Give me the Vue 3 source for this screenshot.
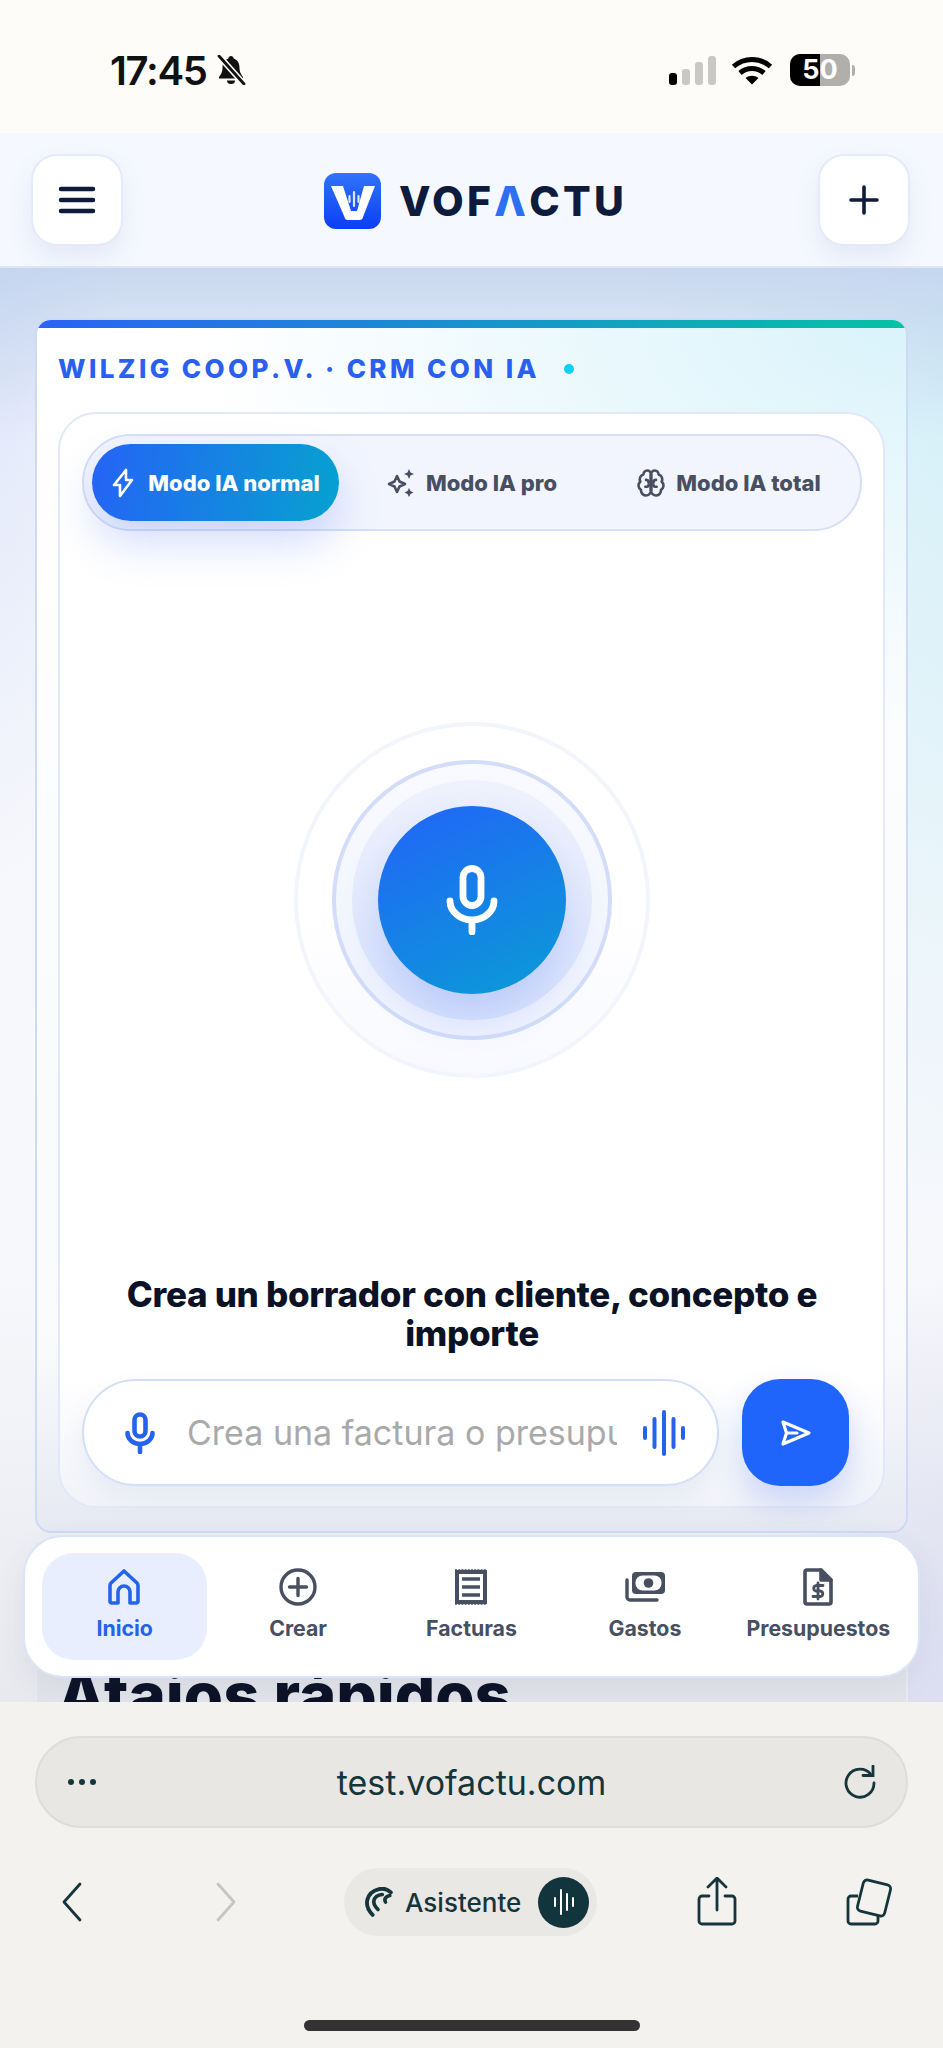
<template>
  <div class="phone">
    <div class="statusBar">
      <div class="statusLeft">
        <span class="time">17:45</span>
        <svg class="bell" viewBox="0 0 30 30">
          <path d="M15 1c1.500 0 2.500 1 2.700 2.500C22 5 23.500 8.500 23.500 13c0 4 1.500 6.500 3.500 9v1.500H3V22c2-2.500 3.500-5 3.500-9 0-4.500 1.500-8 5.800-9.500C12.500 2 13.500 1 15 1z" fill="#111"/>
          <path d="M11 25.500h8a4 3.500 0 0 1-8 0z" fill="#111"/>
          <path d="M3 1l25 28" stroke="#fdfcf8" stroke-width="6"/>
          <path d="M3 1l25 28" stroke="#111" stroke-width="2.800" stroke-linecap="round"/>
        </svg>
      </div>
      <div class="statusRight">
        <div class="signal">
          <i class="on" style="height: 12px"></i>
          <i style="height: 16px"></i>
          <i style="height: 23px"></i>
          <i style="height: 29px"></i>
        </div>
        <svg class="wifi" viewBox="0 0 42 30" fill="none" stroke="#000" stroke-width="5">
          <path d="M2.500 11.500C13 2 29 2 39.500 11.500"/>
          <path d="M9 18c7-6 17-6 24 0"/>
          <path d="M21 29.500l-6.500-6.500c3.500-3 9.500-3 13 0z" fill="#000" stroke="none"/>
        </svg>
        <div class="battery">
          <span class="batteryFill"></span>
          <span class="batteryText">50</span>
        </div>
        <span class="batteryNub"></span>
      </div>
    </div>

    <header class="topBar">
      <button class="squareButton">
        <svg width="38" height="28" viewBox="0 0 38 28" fill="none" stroke="#0f1b3a" stroke-width="4.500" stroke-linecap="round">
          <path d="M3 3h32M3 14h32M3 25h32"/>
        </svg>
      </button>
      <div class="logo">
        <svg class="logoIcon" viewBox="0 0 57 56">
          <defs>
            <linearGradient id="logoBg" x1="0" y1="0" x2="0" y2="1">
              <stop offset="0" stop-color="#3173fb"/>
              <stop offset="1" stop-color="#0b3ff5"/>
            </linearGradient>
          </defs>
          <rect width="57" height="56" rx="12" fill="url(#logoBg)"/>
          <path d="M7 13h12l8 25h6l7-25h11L39 44a3.500 3.500 0 0 1-3.500 3H24a3.500 3.500 0 0 1-3.500-3z" fill="#fff"/>
          <path d="M25.500 23v6M30 19v14M34.500 23v6" stroke="#dce8ff" stroke-width="2.200" stroke-linecap="round"/>
        </svg>
        <span class="logoText">VOF<span class="logoAccent">Λ</span>CTU</span>
      </div>
      <button class="squareButton">
        <svg width="30" height="30" viewBox="0 0 30 30" fill="none" stroke="#0f1b3a" stroke-width="3.600" stroke-linecap="round">
          <path d="M15 2v26M2 15h26"/>
        </svg>
      </button>
    </header>

    <main class="content">
      <section class="card">
        <div class="cardBar"></div>
        <div class="eyebrow">
          <span>WILZIG COOP.V. · CRM CON IA</span>
          <i class="dot"></i>
        </div>
        <div class="panel">
          <div class="modes">
            <div v-for="mode in modes" :key="mode.label" class="mode" :class="{ active: mode.active }">
              <svg v-if="mode.icon === 'bolt'" class="modeIcon boltIcon" viewBox="0 0 24 30" fill="none" stroke="currentColor" stroke-width="2.600" stroke-linejoin="round" stroke-linecap="round">
                <path d="M15 2v10h6L9 28V17H3z"/>
              </svg>
              <svg v-else-if="mode.icon === 'sparkles'" class="modeIcon" viewBox="0 0 30 30" fill="none" stroke="currentColor" stroke-width="2.600" stroke-linejoin="round">
                <path d="M11 8l2.500 5.500L19 16l-5.500 2.500L11 24l-2.500-5.500L3 16l5.500-2.500z"/>
                <path d="M23 1l1.500 3.500L28 6l-3.500 1.500L23 11l-1.500-3.500L18 6l3.500-1.500zM23 20l1.500 3L27.500 24.500 24.500 26 23 29l-1.500-3-3-1.500 3-1.500z" fill="currentColor" stroke="none"/>
              </svg>
              <svg v-else class="modeIcon" viewBox="0 0 24 24" fill="none" stroke="currentColor" stroke-width="2.100" stroke-linecap="round" stroke-linejoin="round">
                <path d="M12 5a3 3 0 1 0-5.997.125 4 4 0 0 0-2.526 5.770 4 4 0 0 0 .556 6.588A4 4 0 1 0 12 18Z"/>
                <path d="M12 5a3 3 0 1 1 5.997.125 4 4 0 0 1 2.526 5.770 4 4 0 0 1-.556 6.588A4 4 0 1 1 12 18Z"/>
                <path d="M12 5v13M8 9.500c1.500 0 2 .800 2 2M16 9.500c-1.500 0-2 .800-2 2M7.500 15c1.500 0 2.500-.500 2.500-1.500M16.500 15c-1.500 0-2.500-.500-2.500-1.500"/>
              </svg>
              <span>{{ mode.label }}</span>
            </div>
          </div>

          <div class="stage">
            <div class="ringOuter">
              <div class="ringBorder">
                <div class="ringSolid">
                  <button class="micButton">
                    <svg width="52" height="70" viewBox="0 0 52 70" fill="none" stroke="#fff" stroke-width="6.800" stroke-linecap="round">
                      <rect x="17" y="3.500" width="18" height="37" rx="9"/>
                      <path d="M4 36a22 19 0 0 0 44 0M26 56v11"/>
                    </svg>
                  </button>
                </div>
              </div>
            </div>
          </div>

          <h2 class="prompt">Crea un borrador con cliente, concepto e importe</h2>

          <div class="composer">
            <div class="inputBox">
              <svg class="inputMic" viewBox="0 0 32 42" fill="none" stroke="#2563eb" stroke-width="4.600" stroke-linecap="round">
                <rect x="10.500" y="2.500" width="11" height="22" rx="5.500"/>
                <path d="M3.500 21a12.500 11 0 0 0 25 0M16 33v7"/>
              </svg>
              <input class="textInput" placeholder="Crea una factura o presupuesto" />
              <svg class="inputWave" viewBox="0 0 44 46" fill="none" stroke="#2563eb" stroke-width="4" stroke-linecap="round">
                <path d="M3 18v10M12.500 9v28M22 2v42M31.500 9v28M41 18v10"/>
              </svg>
            </div>
            <button class="sendButton">
              <svg width="32" height="28" viewBox="0 0 32 28" fill="none" stroke="#fff" stroke-width="3.200" stroke-linejoin="round" stroke-linecap="round">
                <path d="M3 3l26 11L3 25l3.500-11zM6.500 14H17"/>
              </svg>
            </button>
          </div>
        </div>
      </section>

      <section class="shortcuts">
        <h2>Atajos rápidos</h2>
      </section>

      <nav class="bottomNav">
        <div v-for="item in navItems" :key="item.label" class="navItem" :class="{ active: item.active }">
          <svg v-if="item.icon === 'home'" class="navIcon" viewBox="1 0 40 40" fill="none" stroke="currentColor" stroke-width="3.600" stroke-linejoin="round">
            <path d="M20 4l13 12c.800.700 1 1.500 1 2.500V34a2 2 0 0 1-2 2h-6V25a6 6 0 0 0-12 0v11H8a2 2 0 0 1-2-2V18.500c0-1 .200-1.800 1-2.500z"/>
          </svg>
          <svg v-else-if="item.icon === 'plus'" class="navIcon" viewBox="0 0 40 40" fill="none" stroke="currentColor" stroke-width="3.400" stroke-linecap="round">
            <circle cx="20" cy="20" r="17"/>
            <path d="M20 11.500v17M11.500 20h17"/>
          </svg>
          <svg v-else-if="item.icon === 'receipt'" class="navIcon" viewBox="0 0 40 40" fill="none" stroke="currentColor">
            <rect x="6" y="5" width="28" height="30" stroke-width="4"/>
            <path d="M4 3.500h32M4 36.500h32" stroke-width="2.400" stroke-dasharray="2 1.200"/>
            <path d="M11 12h18M11 20h18M11 28h18" stroke-width="3.400"/>
          </svg>
          <svg v-else-if="item.icon === 'money'" class="navIcon" viewBox="0 0 40 40" fill="none" stroke="currentColor">
            <rect x="7" y="5" width="33" height="22" rx="4" fill="currentColor" stroke="none"/>
            <rect x="10.500" y="8.500" width="26" height="15" rx="7" fill="#fff" stroke="none"/>
            <circle cx="23.500" cy="16" r="4.800" fill="currentColor" stroke="none"/>
            <path d="M2 13v17a3 3 0 0 0 3 3h27" stroke-width="3.400" stroke-linecap="round"/>
          </svg>
          <svg v-else class="navIcon" viewBox="0 0 40 40" fill="none" stroke="currentColor" stroke-width="3.600" stroke-linejoin="round" stroke-linecap="round">
            <path d="M9 3h14l10 10v22a2 2 0 0 1-2 2H9a2 2 0 0 1-2-2V5a2 2 0 0 1 2-2z"/>
            <path d="M23 3l10 10H23z" fill="currentColor"/>
            <path d="M25 18.500h-7a2.800 2.800 0 0 0 0 5.500h4.500a2.800 2.800 0 0 1 0 5.500H15M20 16v16" stroke-width="2.800"/>
          </svg>
          <span>{{ item.label }}</span>
        </div>
      </nav>
    </main>

    <footer class="browser">
      <div class="urlBar">
        <span class="urlDots"><i></i><i></i><i></i></span>
        <span class="urlText">test.vofactu.com</span>
        <svg class="reload" viewBox="0 0 34 34" fill="none" stroke="#16353b" stroke-width="2.800" stroke-linecap="round" stroke-linejoin="round">
          <path d="M28 9.500A14 14 0 1 0 31 18"/>
          <path d="M20 10.500h10V1" stroke-linejoin="miter"/>
        </svg>
      </div>
      <div class="toolBar">
        <svg class="chevron" viewBox="0 0 20 40" fill="none" stroke="#16353b" stroke-width="2.800" stroke-linecap="round" stroke-linejoin="round">
          <path d="M18 2L2 20l16 18"/>
        </svg>
        <svg class="chevron forward" viewBox="0 0 20 40" fill="none" stroke="#c7c5c1" stroke-width="2.800" stroke-linecap="round" stroke-linejoin="round">
          <path d="M2 2l16 18L2 38"/>
        </svg>
        <div class="assistant">
          <svg class="assistantIcon" viewBox="0 0 28 28" fill="none" stroke="#16353b" stroke-linecap="round">
            <path d="M9 26C0 17 3 5 15 2c4-1 8 0 11 3" stroke-width="3.600"/>
            <path d="M14 21C7 14 10 8 18 7" stroke-width="3.400"/>
            <path d="M21 14c-1.500-3 0-5 4-6" stroke-width="3.400"/>
          </svg>
          <span>Asistente</span>
          <span class="assistantWave">
            <svg width="22" height="30" viewBox="0 0 22 30" fill="none" stroke="#fff" stroke-width="2" stroke-linecap="round">
              <path d="M2 11v8M8 3v24M14 7v16M20 11v8"/>
            </svg>
          </span>
        </div>
        <svg class="share" viewBox="0 0 40 50" fill="none" stroke="#16353b" stroke-width="2.800" stroke-linecap="round" stroke-linejoin="round">
          <path d="M20 33V2M11 10l9-9 9 9"/>
          <path d="M12 19H5a3 3 0 0 0-3 3v22a3 3 0 0 0 3 3h30a3 3 0 0 0 3-3V22a3 3 0 0 0-3-3h-7"/>
        </svg>
        <svg class="tabs" viewBox="0 0 50 50" fill="none" stroke="#16353b" stroke-width="2.800" stroke-linejoin="round">
          <path d="M13 19H6a3 3 0 0 0-3 3v22a3 3 0 0 0 3 3h24a3 3 0 0 0 3-3v-5"/>
          <rect x="15" y="5" width="28" height="32" rx="4" transform="rotate(14 29 21)"/>
        </svg>
      </div>
      <div class="homeIndicator"></div>
    </footer>
  </div>
</template>

<script setup>
const modes = [
  { label: 'Modo IA normal', icon: 'bolt', active: true },
  { label: 'Modo IA pro', icon: 'sparkles' },
  { label: 'Modo IA total', icon: 'brain' },
];

const navItems = [
  { label: 'Inicio', icon: 'home', active: true },
  { label: 'Crear', icon: 'plus' },
  { label: 'Facturas', icon: 'receipt' },
  { label: 'Gastos', icon: 'money' },
  { label: 'Presupuestos', icon: 'file' },
];
</script>

<style>
html,
body {
  margin: 0;
  background: #f4f2ee;
}
</style>

<style scoped>
.phone {
  width: 943px;
  height: 2048px;
  display: flex;
  flex-direction: column;
  overflow: hidden;
  font-family: Inter, 'Liberation Sans', sans-serif;
}

button {
  border: none;
  padding: 0;
  cursor: pointer;
}

.statusBar {
  height: 133px;
  flex-shrink: 0;
  box-sizing: border-box;
  background: #fdfcf8;
  padding: 50px 88px 0 110px;
  display: flex;
  justify-content: space-between;
  align-items: flex-start;
}

.statusLeft {
  display: flex;
  align-items: center;
  gap: 9px;
  height: 40px;
}

.time {
  font-size: 40px;
  font-weight: 600;
  letter-spacing: -1.3px;
  color: #111;
}

.bell {
  width: 30px;
  height: 30px;
}

.statusRight {
  display: flex;
  align-items: center;
  height: 40px;
}

.signal {
  display: flex;
  align-items: flex-end;
  gap: 5px;
  height: 30px;
}

.signal i {
  width: 8px;
  border-radius: 3px;
  background: #c9c8c4;
}

.signal i.on {
  background: #000;
}

.wifi {
  width: 42px;
  height: 30px;
  margin-left: 15px;
}

.battery {
  position: relative;
  width: 60px;
  height: 32px;
  margin-left: 17px;
  border-radius: 10px;
  overflow: hidden;
  background: #b0afab;
  text-align: center;
}

.batteryFill {
  position: absolute;
  left: 0;
  top: 0;
  bottom: 0;
  width: 30px;
  background: #000;
}

.batteryText {
  position: relative;
  font-size: 27px;
  font-weight: 700;
  line-height: 32px;
  color: #fff;
}

.batteryNub {
  width: 3px;
  height: 11px;
  margin-left: 2px;
  border-radius: 0 3px 3px 0;
  background: #b0afab;
}

.topBar {
  height: 135px;
  flex-shrink: 0;
  box-sizing: border-box;
  background: #f5f8ff;
  border-bottom: 2px solid #dfe6f6;
  padding: 0 33px 0 31px;
  display: flex;
  justify-content: space-between;
  align-items: center;
}

.squareButton {
  width: 92px;
  height: 92px;
  border-radius: 26px;
  background: #fff;
  border: 2px solid #e5eafa;
  box-shadow: 0 12px 24px rgba(90, 110, 180, 0.1);
  display: flex;
  align-items: center;
  justify-content: center;
}

.logo {
  display: flex;
  align-items: center;
  gap: 18px;
  margin: 3px 0 0 10px;
}

.logoIcon {
  width: 57px;
  height: 56px;
}

.logoText {
  font-size: 41px;
  font-weight: 800;
  letter-spacing: 3.3px;
  line-height: 56px;
  color: #0e1b3d;
}

.logoAccent {
  color: #2b6ff2;
}

.content {
  position: relative;
  flex: 1;
  min-height: 0;
  overflow: hidden;
  box-sizing: border-box;
  padding: 50px 35px 0;
  background:
    linear-gradient(180deg, rgba(195, 212, 238, 0.9) 0, rgba(195, 215, 240, 0) 170px),
    radial-gradient(120px 620px at 0 0, #dde5fa 0, rgba(221, 229, 250, 0) 100%),
    radial-gradient(300px 900px at 100% 80px, #d4f0f8 0, rgba(212, 240, 248, 0) 100%),
    radial-gradient(200px 420px at 100% 100%, #dcdef2 0, rgba(220, 222, 242, 0) 100%),
    linear-gradient(180deg, #f7f8fc 0, #f7f8fc 70%, #e8e9ee 100%);
}

.card {
  box-sizing: border-box;
  border: 2px solid #ccdaf6;
  border-radius: 16px;
  overflow: hidden;
  padding: 0 21px 23px;
  background:
    radial-gradient(700px 420px at 100% 0, #d9f3fb 0, rgba(217, 243, 251, 0) 100%),
    linear-gradient(180deg, #fff 0, #f9fafd 85%, #e6e9f2 100%);
}

.cardBar {
  height: 8px;
  margin: 0 -21px;
  background: linear-gradient(90deg, #2b62f5, #05c2a5);
}

.eyebrow {
  display: flex;
  align-items: center;
  gap: 24px;
  height: 84px;
  padding-bottom: 3px;
  box-sizing: border-box;
  font-size: 26px;
  font-weight: 800;
  letter-spacing: 3.4px;
  color: #2a5ff0;
}

.dot {
  width: 10px;
  height: 10px;
  border-radius: 50%;
  background: #0fd0f5;
}

.panel {
  border: 2px solid #e1e8fa;
  border-radius: 38px;
  padding: 20px 21px 20px 22px;
  background: linear-gradient(180deg, #fff 0, #fff 88%, #f1f3f8 100%);
}

.modes {
  box-sizing: border-box;
  height: 97px;
  padding: 9px 3px 9px 8px;
  border: 2px solid #d5dff8;
  border-radius: 49px;
  background: #f2f5fe;
  display: flex;
  align-items: center;
}

.mode {
  display: flex;
  align-items: center;
  justify-content: center;
  gap: 10px;
  height: 77px;
  font-size: 22px;
  font-weight: 800;
  color: #474f60;
  border-radius: 39px;
  flex: 1;
}

.mode.active {
  flex: 0 0 247px;
  margin-right: 4px;
  color: #fff;
  background: linear-gradient(100deg, #2563f6, #06a2cf);
  box-shadow: 0 22px 44px rgba(60, 100, 240, 0.22);
}

.modeIcon {
  width: 30px;
  height: 30px;
}

.boltIcon {
  width: 24px;
  margin-right: 3px;
}

.stage {
  height: 744px;
  padding-bottom: 7px;
  box-sizing: border-box;
  display: flex;
  align-items: center;
  justify-content: center;
}

.ringOuter {
  width: 356px;
  height: 356px;
  box-sizing: border-box;
  border-radius: 50%;
  border: 4px solid #f3f5fd;
  display: flex;
  align-items: center;
  justify-content: center;
  background: linear-gradient(180deg, #fff 55%, #f8f9ff 100%);
}

.ringBorder {
  width: 280px;
  height: 280px;
  box-sizing: border-box;
  border-radius: 50%;
  border: 4px solid #d3ddf9;
  background: linear-gradient(180deg, #f9fafe, #eff3fe);
  display: flex;
  align-items: center;
  justify-content: center;
}

.ringSolid {
  width: 240px;
  height: 240px;
  border-radius: 50%;
  background: linear-gradient(180deg, #eef2fd, #dbe4fc);
  display: flex;
  align-items: center;
  justify-content: center;
}

.micButton {
  width: 188px;
  height: 188px;
  border-radius: 50%;
  background: linear-gradient(155deg, #2264f8, #0a9cd6);
  box-shadow: 0 22px 40px rgba(60, 100, 245, 0.2);
  display: flex;
  align-items: center;
  justify-content: center;
}

.prompt {
  margin: 0 20px 26px;
  font-size: 35px;
  font-weight: 800;
  line-height: 39px;
  text-align: center;
  letter-spacing: -0.3px;
  color: #0b1226;
}

.composer {
  display: flex;
  gap: 23px;
  margin-right: 13px;
}

.inputBox {
  flex: 1;
  height: 107px;
  box-sizing: border-box;
  border: 2px solid #d3def8;
  border-radius: 54px;
  background: #fff;
  padding: 0 24px 0 40px;
  display: flex;
  align-items: center;
  box-shadow: 0 12px 24px rgba(90, 110, 180, 0.08);
}

.inputMic {
  width: 32px;
  height: 42px;
  flex-shrink: 0;
}

.textInput {
  width: 430px;
  margin-left: 31px;
  border: none;
  outline: none;
  padding: 0;
  background: transparent;
  font-family: inherit;
  font-size: 34px;
  color: #333;
}

.textInput::placeholder {
  color: #a9a9a9;
  opacity: 1;
}

.inputWave {
  width: 44px;
  height: 46px;
  margin-left: 25px;
  flex-shrink: 0;
}

.sendButton {
  width: 107px;
  height: 107px;
  border-radius: 38px;
  background: #1f65fb;
  box-shadow: 0 16px 32px rgba(40, 90, 250, 0.2);
  display: flex;
  align-items: center;
  justify-content: center;
}

.shortcuts {
  margin-top: 10px;
  padding: 120px 20px 0;
  border-left: 2px solid #e9ebf2;
  border-right: 2px solid #e9ebf2;
  background: #e2e4ea;
}

.shortcuts h2 {
  margin: 0;
  font-size: 63.5px;
  font-weight: 800;
  line-height: 1;
  color: #0b1226;
}

.bottomNav {
  position: absolute;
  left: 23px;
  right: 23px;
  top: 1267px;
  height: 143px;
  box-sizing: border-box;
  padding: 16px 17px;
  border: 2px solid #dbe4f8;
  border-radius: 40px;
  background: #fff;
  display: grid;
  grid-template-columns: repeat(5, 1fr);
  gap: 8px;
  box-shadow: 0 10px 30px rgba(70, 80, 110, 0.08);
}

.navItem {
  display: flex;
  flex-direction: column;
  align-items: center;
  gap: 8px;
  padding-top: 14px;
  border-radius: 32px;
  color: #474f60;
  font-size: 21.3px;
  font-weight: 700;
  white-space: nowrap;
}

.navItem.active {
  color: #2563eb;
  background: #e8eefd;
}

.navIcon {
  width: 40px;
  height: 40px;
}

.browser {
  height: 346px;
  flex-shrink: 0;
  box-sizing: border-box;
  background: #f4f2ee;
  padding: 34px 35px 0;
}

.urlBar {
  height: 92px;
  box-sizing: border-box;
  border: 2px solid #dfddd9;
  border-radius: 46px;
  background: #e9e7e4;
  position: relative;
  display: flex;
  align-items: center;
  justify-content: center;
}

.urlDots {
  position: absolute;
  left: 31px;
  display: flex;
  gap: 5px;
}

.urlDots i {
  width: 6px;
  height: 6px;
  border-radius: 50%;
  background: #16353b;
}

.urlText {
  font-size: 34px;
  color: #16353b;
}

.reload {
  position: absolute;
  right: 29px;
  width: 34px;
  height: 34px;
}

.toolBar {
  position: relative;
  height: 68px;
  margin-top: 40px;
  display: flex;
  align-items: center;
}

.chevron {
  width: 20px;
  height: 40px;
  margin-left: 27px;
}

.chevron.forward {
  margin-left: 134px;
}

.assistant {
  margin-left: 108px;
  width: 253px;
  height: 68px;
  box-sizing: border-box;
  border-radius: 34px;
  background: #eae8e4;
  padding: 0 8px 0 19px;
  display: flex;
  align-items: center;
  font-size: 26px;
  font-weight: 500;
  color: #16353b;
}

.assistantIcon {
  width: 30px;
  height: 30px;
  margin-right: 12px;
}

.assistantWave {
  width: 51px;
  height: 51px;
  margin-left: auto;
  border-radius: 50%;
  background: #12343c;
  display: flex;
  align-items: center;
  justify-content: center;
}

.share {
  width: 40px;
  height: 50px;
  margin-left: 100px;
}

.tabs {
  width: 50px;
  height: 50px;
  margin-left: 108px;
}

.homeIndicator {
  width: 336px;
  height: 11px;
  margin: 84px auto 0;
  border-radius: 6px;
  background: #333;
}
</style>
